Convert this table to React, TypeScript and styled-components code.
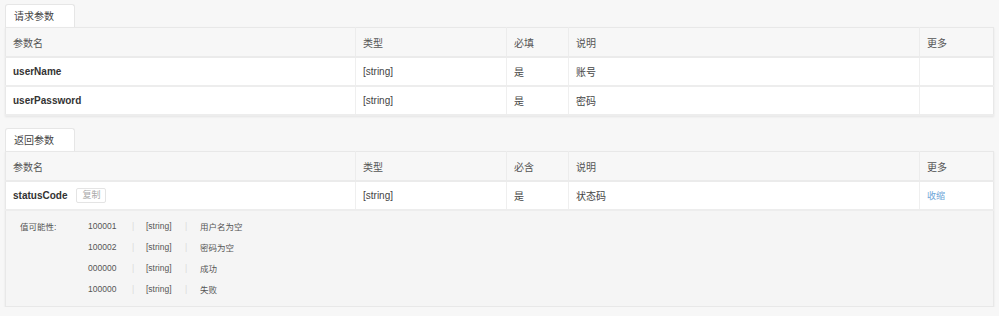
import React from 'react';
import styled, { createGlobalStyle } from 'styled-components';

const Global = createGlobalStyle`
  body {
    margin: 0;
    background: #f7f7f7;
    font-family: "Liberation Sans", Arial, "Noto Sans CJK SC", sans-serif;
    font-size: 10px;
    color: #333;
  }
`;

const Page = styled.div`
  padding: 4px 6px 0 5px;
  display: flex;
  flex-direction: column;
  gap: 12px;
`;

const Section = styled.section`
  display: flex;
  flex-direction: column;
`;

const Tab = styled.div`
  align-self: flex-start;
  width: 70px;
  height: 23px;
  box-sizing: border-box;
  padding-left: 8px;
  line-height: 23px;
  background: #fff;
  border: 1px solid #e6e6e6;
  border-bottom: none;
  border-radius: 3px 3px 0 0;
  font-size: 10px;
  color: #444;
`;

const Table = styled.table`
  width: 988px;
  border-collapse: collapse;
  table-layout: fixed;
  background: #fff;
  box-shadow: 0 1px 2px rgba(0, 0, 0, 0.08);
  border: 1px solid #e8e8e8;
`;

const Th = styled.th`
  height: 28px;
  padding: 0 7px;
  text-align: left;
  font-weight: normal;
  font-size: 10px;
  color: #555;
  background: #f7f7f7;
  border-right: 1px solid #ececec;
  border-bottom: 2px solid #ebebeb;
  &:last-child { border-right: none; }
`;

const Td = styled.td`
  height: 27px;
  padding: 0 7px;
  font-size: 10px;
  color: #444;
  border-right: 1px solid #efefef;
  border-bottom: 2px solid #ededed;
  white-space: nowrap;
  &:last-child { border-right: none; }
`;

const Name = styled.span`
  font-weight: bold;
  font-size: 10px;
  color: #333;
`;

const CopyBtn = styled.span`
  display: inline-block;
  margin-left: 9px;
  padding: 0 5px;
  line-height: 13px;
  border: 1px solid #e4e4e4;
  border-radius: 2px;
  font-size: 9px;
  color: #aaa;
  vertical-align: 1px;
`;

const Link = styled.span`
  color: #6ea6d8;
  font-size: 9px;
`;

const Detail = styled.td`
  background: #f5f5f5;
  padding: 4px 14px 7px 14px;
`;

const Values = styled.div`
  display: grid;
  grid-template-columns: 68px 44px 14px 39px 15px auto;
  grid-auto-rows: 21px;
  align-items: center;
  font-size: 8.5px;
  color: #555;
`;

const Cell = styled.span<{ $row: number; $col: number }>`
  grid-row: ${p => p.$row};
  grid-column: ${p => p.$col};
`;

const Sep = styled(Cell)`
  color: #dadada;
`;

const cols = [350, 151, 62, 351, 74];

const values = [
  ['100001', '[string]', '用户名为空'],
  ['100002', '[string]', '密码为空'],
  ['000000', '[string]', '成功'],
  ['100000', '[string]', '失败'],
];

const ColGroup = () => (
  <colgroup>
    {cols.map((w, i) => <col key={i} style={{ width: w }} />)}
  </colgroup>
);

export default function App() {
  return (
    <Page>
      <Global />
      <Section>
        <Tab>请求参数</Tab>
        <Table>
          <ColGroup />
          <thead>
            <tr>
              {['参数名', '类型', '必填', '说明', '更多'].map(h => <Th key={h}>{h}</Th>)}
            </tr>
          </thead>
          <tbody>
            <tr>
              <Td><Name>userName</Name></Td>
              <Td>[string]</Td>
              <Td>是</Td>
              <Td>账号</Td>
              <Td />
            </tr>
            <tr>
              <Td><Name>userPassword</Name></Td>
              <Td>[string]</Td>
              <Td>是</Td>
              <Td>密码</Td>
              <Td />
            </tr>
          </tbody>
        </Table>
      </Section>
      <Section>
        <Tab>返回参数</Tab>
        <Table>
          <ColGroup />
          <thead>
            <tr>
              {['参数名', '类型', '必含', '说明', '更多'].map(h => <Th key={h}>{h}</Th>)}
            </tr>
          </thead>
          <tbody>
            <tr>
              <Td><Name>statusCode</Name><CopyBtn>复制</CopyBtn></Td>
              <Td>[string]</Td>
              <Td>是</Td>
              <Td>状态码</Td>
              <Td><Link>收缩</Link></Td>
            </tr>
            <tr>
              <Detail colSpan={5}>
                <Values>
                  <Cell $row={1} $col={1}>值可能性:</Cell>
                  {values.map(([code, type, desc], i) => (
                    <React.Fragment key={i}>
                      <Cell $row={i + 1} $col={2}>{code}</Cell>
                      <Sep $row={i + 1} $col={3}>|</Sep>
                      <Cell $row={i + 1} $col={4}>{type}</Cell>
                      <Sep $row={i + 1} $col={5}>|</Sep>
                      <Cell $row={i + 1} $col={6}>{desc}</Cell>
                    </React.Fragment>
                  ))}
                </Values>
              </Detail>
            </tr>
          </tbody>
        </Table>
      </Section>
    </Page>
  );
}
